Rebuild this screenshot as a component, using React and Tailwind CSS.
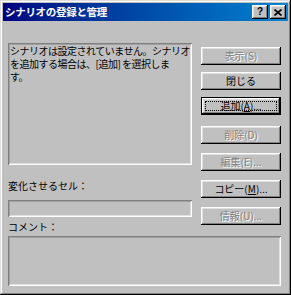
const jp = { fontFamily: '"Noto Sans CJK JP", "Noto Sans", sans-serif' }

const raised =
  'shadow-[inset_-1px_-1px_#000,inset_1px_1px_#fff,inset_-2px_-2px_#808080,inset_2px_2px_#dfdfdf]'
const defRaised =
  'shadow-[inset_0_0_0_1px_#000,inset_-2px_-2px_#000,inset_2px_2px_#fff,inset_-3px_-3px_#808080,inset_3px_3px_#dfdfdf]'
const sunken =
  'shadow-[inset_1px_1px_#808080,inset_-1px_-1px_#fff,inset_2px_2px_#a0a0a0,inset_-2px_-2px_#dfdfdf]'

function Btn({ label, disabled, def, mt, children }) {
  return (
    <div
      className={`relative h-[18px] w-[80px] flex items-center justify-center text-[10px] leading-none bg-[#c0c0c0] ${
        def ? defRaised : raised
      } ${mt || ''} ${disabled ? 'text-[#808080] [text-shadow:1px_1px_#fff]' : 'text-black'}`}
    >
      {def && <div className="absolute inset-[4px] border border-dotted border-black" />}
      <span>{children || label}</span>
    </div>
  )
}

export default function App() {
  return (
    <div
      style={jp}
      className="w-[291px] h-[295px] bg-[#c0c0c0] p-[3px] flex flex-col shadow-[inset_-1px_-1px_#000,inset_1px_1px_#dfdfdf,inset_-2px_-2px_#808080,inset_2px_2px_#fff]"
    >
      <div className="h-[18px] flex items-center justify-between pl-[2px] pr-[2px] bg-gradient-to-r from-[#000080] to-[#1084d0]">
        <span className="text-white text-[10.5px] font-bold leading-none tracking-[-0.3px]">シナリオの登録と管理</span>
        <div className="flex gap-[2px]">
          <div className={`w-[16px] h-[14px] bg-[#c0c0c0] flex items-center justify-center text-[10px] font-bold leading-none text-black ${raised}`} style={{ fontFamily: '"Liberation Sans", sans-serif' }}>
            ?
          </div>
          <div className={`w-[16px] h-[14px] bg-[#c0c0c0] flex items-center justify-center ${raised}`}>
            <svg width="8" height="7" viewBox="0 0 8 7">
              <path d="M0.5 0.5L7.5 6.5M7.5 0.5L0.5 6.5" stroke="#000" strokeWidth="1.6" />
            </svg>
          </div>
        </div>
      </div>

      <div className="flex flex-col pl-[5px] pr-[7px] pt-[22px]">
        <div className="flex">
          <div className="w-[184px] flex flex-col">
            <div className={`h-[122px] px-[2px] pt-[1px] text-[10px] leading-[13px] tracking-[-0.5px] text-black whitespace-nowrap ${sunken}`}>
              <div>シナリオは設定されていません。シナリオ</div>
              <div>を追加する場合は、[追加] を選択しま</div>
              <div>す。</div>
            </div>
            <div className="mt-[14px] h-[13px] text-[10px] leading-[13px] text-black">変化させるセル：</div>
            <div className={`mt-[8px] h-[17px] ${sunken}`} />
            <div className="mt-[3px] h-[13px] text-[10px] leading-[13px] text-black">コメント：</div>
          </div>
          <div className="ml-[9px] mt-[4px] flex flex-col">
            <Btn label="表示(S)" disabled />
            <Btn label="閉じる" mt="mt-[7px]" />
            <Btn def mt="mt-[7px]">
              追加(<span className="underline">A</span>)...
            </Btn>
            <Btn label="削除(D)" disabled mt="mt-[11px]" />
            <Btn label="編集(E)..." disabled mt="mt-[9px]" />
            <Btn mt="mt-[9px]">
              コピー(<span className="underline">M</span>)...
            </Btn>
            <Btn label="情報(U)..." disabled mt="mt-[9px]" />
          </div>
        </div>
        <div className={`mt-[3px] h-[50px] ${sunken}`} />
      </div>
    </div>
  )
}
